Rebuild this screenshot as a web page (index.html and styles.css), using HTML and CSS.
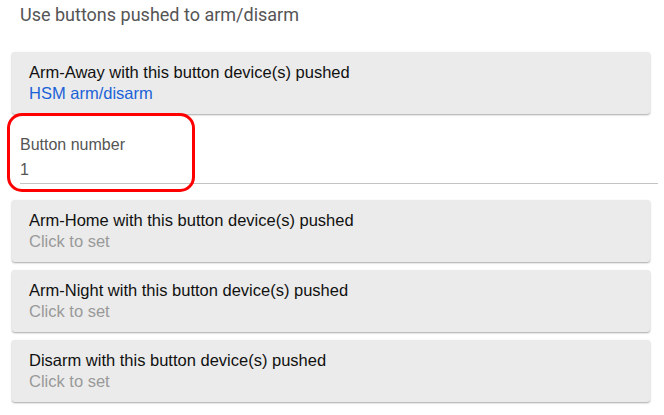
FILE: index.html
```html
<!DOCTYPE html>
<html lang="en">
<head>
    <meta charset="UTF-8">
    <meta name="viewport" content="width=device-width, initial-scale=1.0">
    <title>Button Controller</title>
    <link rel="stylesheet" href="styles.css">
</head>
<body>
    <div class="page">
        <div class="section-title">Use buttons pushed to arm/disarm</div>

        <div class="card">
            <div class="card-label">Arm-Away with this button device(s) pushed</div>
            <div class="card-value link">HSM arm/disarm</div>
        </div>

        <div class="field">
            <div class="field-label">Button number</div>
            <div class="field-value">1</div>
            <!-- annotation drawn over the field -->
            <div class="highlight"></div>
        </div>

        <div class="card">
            <div class="card-label">Arm-Home with this button device(s) pushed</div>
            <div class="card-value muted">Click to set</div>
        </div>

        <div class="card">
            <div class="card-label">Arm-Night with this button device(s) pushed</div>
            <div class="card-value muted">Click to set</div>
        </div>

        <div class="card">
            <div class="card-label">Disarm with this button device(s) pushed</div>
            <div class="card-value muted">Click to set</div>
        </div>
    </div>
</body>
</html>
```

FILE: styles.css
```css
body {
    margin: 0;
    background-color: #fff;
    font-family: "Liberation Sans", Arial, sans-serif;
}
.page {
    display: flex;
    flex-direction: column;
    gap: 8px;
    padding-bottom: 12px;
}
.section-title {
    font-family: Roboto, "Liberation Sans", sans-serif;
    font-size: 18px;
    color: #555;
    padding: 3px 0 0 20px;
    line-height: 24px;
    margin-bottom: 17px;
}
.card {
    margin: 0 14px 0 12px;
    height: 62px;
    box-sizing: border-box;
    padding: 10px 17px;
    background-color: #ebebeb;
    border-radius: 3px;
    box-shadow: 0 1px 2px rgba(0,0,0,0.35);
    font-size: 16.5px;
    line-height: 21px;
}
.card-label {
    color: #111;
}
.link {
    color: #1a62d8;
}
.muted {
    color: #999;
}
.field {
    position: relative;
    margin: -8px 6px 8px 20px;
    padding-top: 19px;
    height: 70px;
    box-sizing: border-box;
    border-bottom: 1px solid #c4c4c4;
    font-size: 16px;
    color: #555;
    line-height: 24px;
}
.field-value {
    margin-top: 1px;
}
.highlight {
    position: absolute;
    left: -13px;
    top: -1px;
    width: 182px;
    height: 73px;
    border: 3px solid #f00;
    border-radius: 15px;
}
```
